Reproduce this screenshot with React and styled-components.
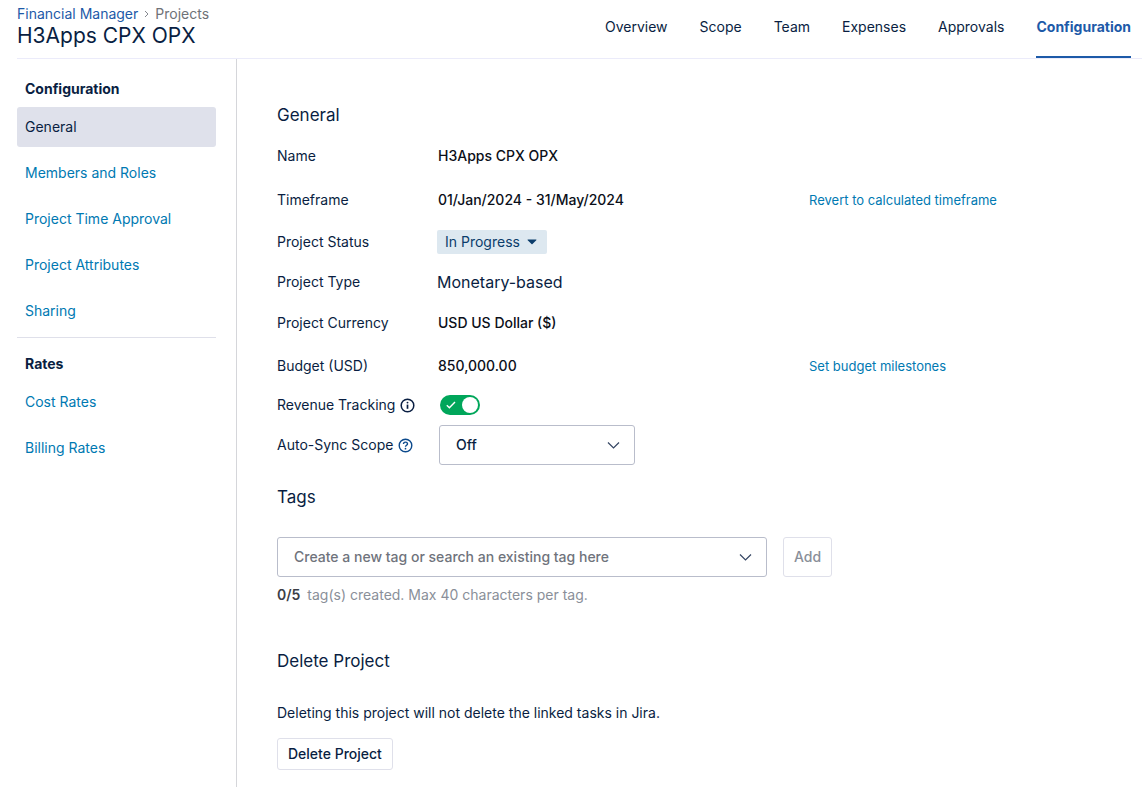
import React, { useState } from 'react';
import styled, { createGlobalStyle } from 'styled-components'

const colors = {
  text: '#091e42',
  value: '#0b0f19',
  link: '#0079b2',
  primary: '#1d5aa8',
  muted: '#8a8f99',
  border: '#b9bdcb',
  lightBorder: '#dfe0ea',
}

const GlobalStyle = createGlobalStyle`
  * {
    box-sizing: border-box;
  }

  body {
    margin: 0;
    background-color: #fff;
    color: ${colors.text};
    font: 400 14px/20px Inter, sans-serif;
  }

  button, input, select {
    font: inherit;
    color: inherit;
  }

  a {
    text-decoration: none;
  }
`

const Page = styled.div`
  display: flex;
  flex-direction: column;
  min-height: 100vh;
  padding-left: 17px;
`

const Header = styled.header`
  display: flex;
  justify-content: space-between;
  padding-right: 11px;
  border-bottom: 1px solid #ebebfa;
`

const Heading = styled.div`
  padding-top: 4px;
`

const Breadcrumbs = styled.nav`
  display: flex;
  align-items: center;
  gap: 6px;
  color: #6f7278;

  a {
    color: ${colors.primary};
  }
`

const ProjectName = styled.h1`
  margin: 0;
  font-size: 21px;
  font-weight: 400;
  line-height: 24px;
`

const Tabs = styled.nav`
  display: flex;
  gap: 32px;
`

const Tab = styled.a`
  height: 58px;
  padding-top: 17px;
  border-bottom: 2px solid ${({ $active }) => $active ? colors.primary : 'transparent'};
  color: ${({ $active }) => $active ? colors.primary : colors.text};
  font-weight: ${({ $active }) => $active ? 700 : 400};
`

const Body = styled.div`
  flex: 1;
  display: grid;
  grid-template-columns: 220px minmax(0, 1fr);
`

const Sidebar = styled.aside`
  padding: 12px 20px 0 0;
  border-right: 1px solid #d5d6da;
`

const MenuTitle = styled.h2`
  margin: 0;
  padding: 8px;
  font-size: 14px;
  font-weight: 700;
  line-height: 20px;
`

const Menu = styled.nav`
  display: grid;
  grid-row-gap: 6px;
`

const MenuLink = styled.a`
  padding: 10px 8px;
  border-radius: 3px;
  color: ${({ $active }) => $active ? colors.text : colors.link};
  background-color: ${({ $active }) => $active ? '#dfe1eb' : 'transparent'};
`

const Divider = styled.hr`
  margin: 6px 0 8px;
  border: 0;
  border-top: 1px solid ${colors.lightBorder};
`

const Content = styled.main`
  padding: 44px 40px 16px;
`

const SectionTitle = styled.h2`
  margin: 0;
  font-size: 17px;
  font-weight: 400;
  line-height: 24px;
`

const Fields = styled.div`
  display: grid;
  grid-template-rows: 44px 44px 40px 40px 42px 44px 34px 46px;
  margin: 7px 0 17px;
`

const Field = styled.div`
  display: grid;
  grid-template-columns: 160px minmax(0, 372px) minmax(0, 1fr);
  align-items: center;
`

const FieldLabel = styled.label`
  display: flex;
  align-items: center;
  gap: 5px;
`

const Value = styled.span`
  padding-left: 1px;
  color: ${colors.value};
  font-weight: 500;
`

const LargeValue = styled.span`
  font-size: 16px;
`

const ActionLink = styled.a`
  color: ${colors.link};
  font-size: 13px;
`

const Control = styled.div`
  display: grid;
  align-items: center;
  width: ${({ $width }) => $width};
  max-width: 100%;
  margin-left: ${({ $inset }) => $inset ? '2px' : '0'};

  > * {
    grid-area: 1 / 1;
  }

  svg {
    justify-self: end;
    margin-right: ${({ $inset, $wide }) => $inset || $wide ? '14px' : '10px'};
    pointer-events: none;
  }
`

const StatusSelect = styled.select`
  appearance: none;
  height: 24px;
  padding: 0 8px;
  border: 0;
  border-radius: 2px;
  background-color: #dde8f0;
  color: #0b3d6b;
`

const Select = styled.select`
  appearance: none;
  height: 40px;
  padding: 0 16px;
  border: 1px solid ${colors.border};
  border-radius: 3px;
  background-color: #fff;
  font-weight: 500;
`

const TagInput = styled.input`
  width: 100%;
  height: 40px;
  padding: 0 16px 2px;
  border: 1px solid ${colors.border};
  border-radius: 3px;
  font-weight: 500;

  &::placeholder {
    color: #6f737c;
    opacity: 1;
  }
`

const Switch = styled.span`
  display: grid;
  align-items: center;
  width: 40px;
  height: 20px;
  margin-left: 3px;
  border-radius: 10px;
  background-color: ${({ $on }) => $on ? '#00a65a' : '#8a8f99'};

  > * {
    grid-area: 1 / 1;
  }

  svg {
    margin-left: 6px;
    pointer-events: none;
  }
`

const SwitchInput = styled.input`
  appearance: none;
  width: 40px;
  height: 20px;
  margin: 0;
  cursor: pointer;

  &::before {
    content: '';
    display: block;
    width: 16px;
    height: 16px;
    margin: 2px;
    border-radius: 50%;
    background-color: #fff;
  }

  &:checked::before {
    margin-left: 22px;
  }
`

const TagRow = styled.div`
  display: flex;
  gap: 16px;
  margin-top: 28px;
`

const TagHint = styled.p`
  display: flex;
  gap: 7px;
  margin: 8px 0 44px;
  color: ${colors.muted};

  strong {
    color: #3b3f48;
    font-weight: 600;
  }
`

const Button = styled.button`
  height: ${({ $tall }) => $tall ? '40px' : '32px'};
  padding: 0 10px;
  border: 1px solid ${colors.lightBorder};
  border-radius: 3px;
  background-color: #fff;
  font-weight: 500;

  &:disabled {
    color: ${colors.muted};
  }
`

const DeleteText = styled.p`
  margin: 30px 0 15px;
`

const tabs = ['Overview', 'Scope', 'Team', 'Expenses', 'Approvals', 'Configuration']
const configLinks = ['General', 'Members and Roles', 'Project Time Approval', 'Project Attributes', 'Sharing']
const rateLinks = ['Cost Rates', 'Billing Rates']

const Crumb = () => (
  <svg width='5' height='8' viewBox='0 0 5 8' fill='none' stroke='#85888f' aria-hidden='true'>
    <path d='M1 1 4 4 1 7' />
  </svg>
)

const Chevron = () => (
  <svg width='14' height='14' viewBox='0 0 14 14' fill='none' stroke='#344563' strokeWidth='1.2' aria-hidden='true'>
    <path d='M1 4.5 6.5 10 12 4.5' />
  </svg>
)

const Caret = () => (
  <svg width='10' height='6' viewBox='0 0 10 6' fill='#0b3d6b' aria-hidden='true'>
    <path d='M1 .5h8c.4 0 .6.4.3.7L5.5 5.1a.7.7 0 0 1-1 0L.7 1.2C.4.9.6.5 1 .5z' />
  </svg>
)

const Check = () => (
  <svg width='10' height='8' viewBox='0 0 10 8' fill='none' stroke='#fff' strokeWidth='1.4' aria-hidden='true'>
    <path d='M.8 4.3 3.4 6.8 9 .9' />
  </svg>
)

const Info = () => (
  <svg width='15' height='15' viewBox='0 0 15 15' fill='none' stroke={colors.text} strokeWidth='1.5' aria-hidden='true'>
    <circle cx='7.5' cy='7.5' r='6.3' />
    <path d='M7.5 6.6v4.2' strokeWidth='1.7' />
    <circle cx='7.5' cy='4.6' r='.95' fill={colors.text} stroke='none' />
  </svg>
)

const Help = () => (
  <svg width='15' height='15' viewBox='0 0 15 15' fill='none' stroke='#0c4a8c' strokeWidth='1.4' aria-hidden='true'>
    <circle cx='7.5' cy='7.5' r='6.3' />
    <path d='M5.5 6c0-1.2.9-1.9 2-1.9s2 .7 2 1.8c0 1.4-2 1.4-2 2.9' />
    <circle cx='7.5' cy='10.7' r='.85' fill='#0c4a8c' stroke='none' />
  </svg>
)

function App() {
  const [tracking, setTracking] = useState(true)

  return (
    <Page>
      <GlobalStyle />
      <Header>
        <Heading>
          <Breadcrumbs aria-label='Breadcrumb'>
            <a href='#home'>Financial Manager</a>
            <Crumb />
            <span>Projects</span>
          </Breadcrumbs>
          <ProjectName>H3Apps CPX OPX</ProjectName>
        </Heading>
        <Tabs>
          {tabs.map(tab => <Tab key={tab} href='#tab' $active={tab === 'Configuration'}>{tab}</Tab>)}
        </Tabs>
      </Header>
      <Body>
        <Sidebar>
          <MenuTitle>Configuration</MenuTitle>
          <Menu>
            {configLinks.map(link => <MenuLink key={link} href='#config' $active={link === 'General'}>{link}</MenuLink>)}
          </Menu>
          <Divider />
          <MenuTitle>Rates</MenuTitle>
          <Menu>
            {rateLinks.map(link => <MenuLink key={link} href='#rates'>{link}</MenuLink>)}
          </Menu>
        </Sidebar>
        <Content>
          <SectionTitle>General</SectionTitle>
          <Fields>
            <Field>
              <span>Name</span>
              <Value>H3Apps CPX OPX</Value>
            </Field>
            <Field>
              <span>Timeframe</span>
              <Value>01/Jan/2024 - 31/May/2024</Value>
              <ActionLink href='#revert'>Revert to calculated timeframe</ActionLink>
            </Field>
            <Field>
              <FieldLabel htmlFor='status'>Project Status</FieldLabel>
              <Control $width='110px'>
                <StatusSelect id='status'>
                  <option>In Progress</option>
                </StatusSelect>
                <Caret />
              </Control>
            </Field>
            <Field>
              <span>Project Type</span>
              <LargeValue>Monetary-based</LargeValue>
            </Field>
            <Field>
              <span>Project Currency</span>
              <Value>USD US Dollar ($)</Value>
            </Field>
            <Field>
              <span>Budget (USD)</span>
              <Value>850,000.00</Value>
              <ActionLink href='#milestones'>Set budget milestones</ActionLink>
            </Field>
            <Field>
              <FieldLabel htmlFor='tracking'>Revenue Tracking <Info /></FieldLabel>
              <Switch $on={tracking}>
                <SwitchInput
                  id='tracking'
                  type='checkbox'
                  checked={tracking}
                  onChange={e => setTracking(e.target.checked)}
                />
                {tracking && <Check />}
              </Switch>
            </Field>
            <Field>
              <FieldLabel htmlFor='sync'>Auto-Sync Scope <Help /></FieldLabel>
              <Control $width='196px' $inset>
                <Select id='sync'>
                  <option>Off</option>
                </Select>
                <Chevron />
              </Control>
            </Field>
          </Fields>

          <SectionTitle>Tags</SectionTitle>
          <TagRow>
            <Control $width='490px' $wide>
              <TagInput type='text' aria-label='Tag' placeholder='Create a new tag or search an existing tag here' />
              <Chevron />
            </Control>
            <Button $tall disabled>Add</Button>
          </TagRow>
          <TagHint><strong>0/5</strong> tag(s) created. Max 40 characters per tag.</TagHint>

          <SectionTitle>Delete Project</SectionTitle>
          <DeleteText>Deleting this project will not delete the linked tasks in Jira.</DeleteText>
          <Button>Delete Project</Button>
        </Content>
      </Body>
    </Page>
  )
}

export default App
